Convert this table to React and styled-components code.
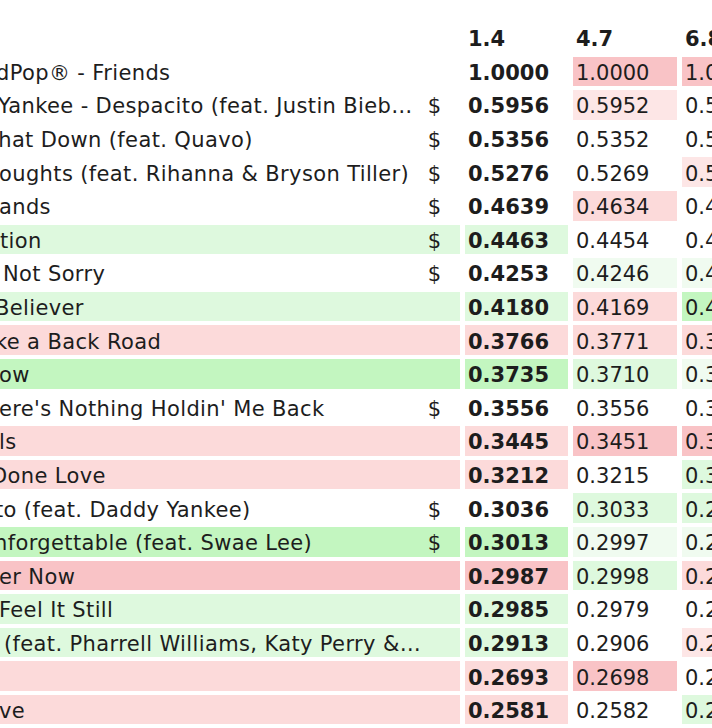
import React from "react";
import styled, { createGlobalStyle } from "styled-components";

const GlobalStyle = createGlobalStyle`
  html, body {
    margin: 0;
    padding: 0;
    background: #ffffff;
    overflow: hidden;
  }
`;

// cell colours, from weak to strong
const bg = {
  w: "transparent",
  g0: "#f0fbf0",
  g1: "#def9de",
  g2: "#c3f6c0",
  r0: "#fde6e6",
  r1: "#fcdada",
  r2: "#f9c3c6",
};

const COLS = "460px 103px 104px 104px";

const Sheet = styled.div`
  display: flex;
  flex-direction: column;
  gap: 4px;
  padding-top: 23px;
  width: max-content;
  font-family: "DejaVu Sans", Verdana, sans-serif;
  font-size: 21px;
  color: #1d1d1d;
`;

const Row = styled.div`
  display: grid;
  grid-template-columns: ${COLS};
  column-gap: 5px;
  height: 29.6px;
`;

const TitleCell = styled.div`
  display: flex;
  align-items: center;
  box-sizing: border-box;
  padding: 3px 19px 0 0;
  background: ${(p) => bg[p.$bg]};
  overflow: hidden;
  white-space: nowrap;
`;

const TitleText = styled.span`
  flex: 1;
  margin-left: ${(p) => p.$indent}px;
  letter-spacing: 0.37px;
`;

const Dollar = styled.span`
  flex: none;
`;

const Score = styled.div`
  display: flex;
  align-items: center;
  box-sizing: border-box;
  padding: 3px 0 0 3px;
  background: ${(p) => bg[p.$bg]};
  font-weight: ${(p) => (p.$bold ? 700 : 400)};
  white-space: nowrap;
  overflow: hidden;
`;

const rows = [
  ["dPop® - Friends", -4, false, "w", "1.0000", "1.0000", "r2", "1.0000", "r2"],
  ["Yankee - Despacito (feat. Justin Bieb…", -2, true, "w", "0.5956", "0.5952", "r0", "0.5948", "w"],
  ["That Down (feat. Quavo)", -15, true, "w", "0.5356", "0.5352", "w", "0.5341", "w"],
  ["oughts (feat. Rihanna & Bryson Tiller)", -1, true, "w", "0.5276", "0.5269", "w", "0.5281", "r0"],
  ["ands", -1, true, "w", "0.4639", "0.4634", "r1", "0.4627", "w"],
  ["tion", 0, true, "g1", "0.4463", "0.4454", "w", "0.4449", "w"],
  [" Not Sorry", 3, true, "w", "0.4253", "0.4246", "g0", "0.4238", "g0"],
  ["Believer", -5, false, "g1", "0.4180", "0.4169", "r1", "0.4151", "g2"],
  ["ke a Back Road", -5, false, "r1", "0.3766", "0.3771", "r1", "0.3779", "r1"],
  ["ow", -1, false, "g2", "0.3735", "0.3710", "g1", "0.3702", "g0"],
  ["ere's Nothing Holdin' Me Back", -1, true, "w", "0.3556", "0.3556", "w", "0.3549", "w"],
  ["ls", -1, false, "r1", "0.3445", "0.3451", "r2", "0.3458", "r2"],
  ["Done Love", -9, false, "r1", "0.3212", "0.3215", "w", "0.3201", "g1"],
  ["to (feat. Daddy Yankee)", -5, true, "w", "0.3036", "0.3033", "g1", "0.2998", "g1"],
  ["nforgettable (feat. Swae Lee)", -6, true, "g2", "0.3013", "0.2997", "g0", "0.2991", "g0"],
  ["er Now", -1, false, "r2", "0.2987", "0.2998", "g1", "0.2999", "r1"],
  [" Feel It Still", -1, false, "g1", "0.2985", "0.2979", "w", "0.2971", "w"],
  [" (feat. Pharrell Williams, Katy Perry &…", 4, false, "g1", "0.2913", "0.2906", "w", "0.2918", "r0"],
  ["", 0, false, "r1", "0.2693", "0.2698", "r2", "0.2687", "w"],
  ["ve", -1, false, "r1", "0.2581", "0.2582", "w", "0.2570", "g1"],
];

export default function App() {
  return (
    <>
      <GlobalStyle />
      <Sheet>
        <Row>
          <TitleCell $bg="w" />
          <Score $bg="w" $bold>1.4</Score>
          <Score $bg="w" $bold>4.7</Score>
          <Score $bg="w" $bold>6.8</Score>
        </Row>
        {rows.map(([title, indent, paid, rowBg, a, b, bBg, c, cBg], i) => (
          <Row key={i}>
            <TitleCell $bg={rowBg}>
              <TitleText $indent={indent}>{title}</TitleText>
              {paid && <Dollar>$</Dollar>}
            </TitleCell>
            <Score $bg={rowBg} $bold>{a}</Score>
            <Score $bg={bBg}>{b}</Score>
            <Score $bg={cBg}>{c}</Score>
          </Row>
        ))}
      </Sheet>
    </>
  );
}
